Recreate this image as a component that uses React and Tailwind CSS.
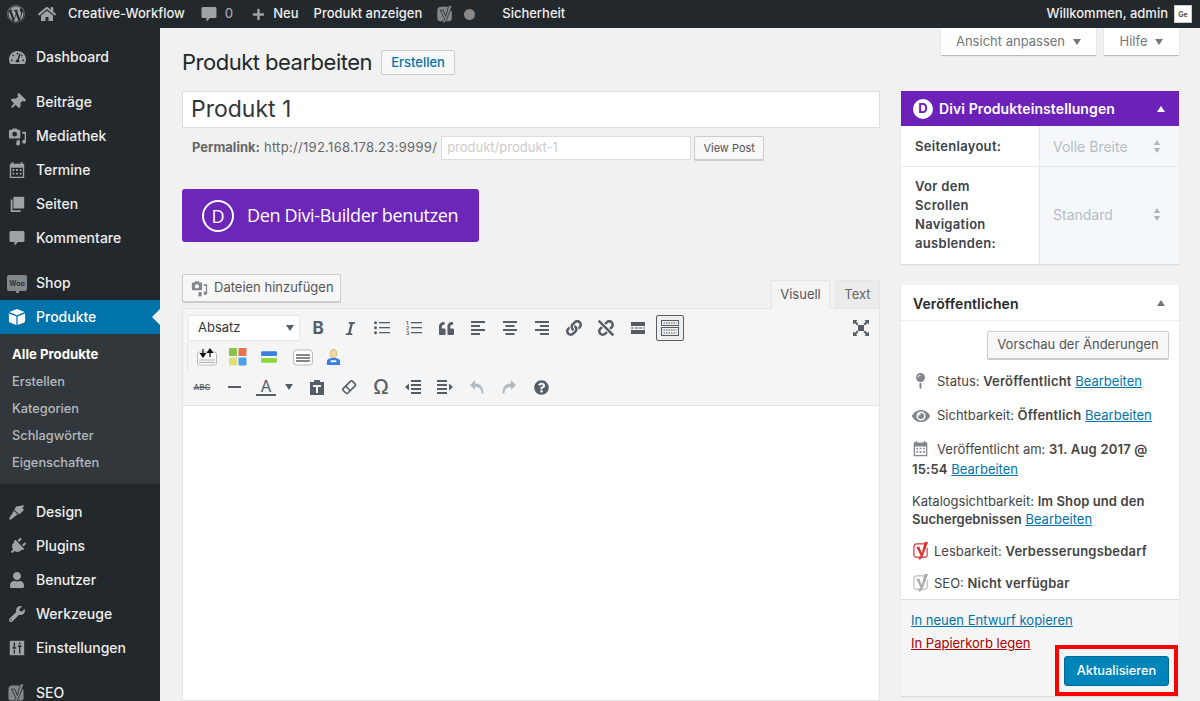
import {
  FaWordpress, FaHome, FaPlus, FaThumbtack, FaPlug, FaUser, FaWrench,
  FaTachometerAlt, FaEye, FaMapPin, FaItalic, FaQuoteLeft, FaLink, FaUnlink, FaQuestionCircle,
} from 'react-icons/fa';

const font = 'font-["Inter","Liberation_Sans",sans-serif]';

const YoastIcon = ({ className, stroke = 'currentColor', y = 'currentColor', filled }) => (
  <svg viewBox="0 0 20 20" className={className} fill="none">
    <path
      d="M13 3H5a3 3 0 0 0-3 3v9a2 2 0 0 0 2 2h10a2 2 0 0 0 2-2V7"
      stroke={stroke}
      strokeWidth="1.200"
      fill={filled ? stroke : 'none'}
    />
    <path
      d="M4.500 6h3.200l2.600 6.500L13.300 1h3.700L10.800 17c-.7 1.600-1.800 2.400-3.800 2.400v-2.200c1 0 1.500-.4 1.800-1.200L9 15.200z"
      fill={y}
      stroke={filled ? '#23282d' : 'none'}
      strokeWidth="0.800"
    />
  </svg>
);

const MediaIcon = ({ className }) => (
  <svg viewBox="0 0 20 20" className={className} fill="currentColor">
    <path d="M2 3h2l1-1.500h4l1 1.500h2a1 1 0 0 1 1 1v7a1 1 0 0 1-1 1H2a1 1 0 0 1-1-1V4a1 1 0 0 1 1-1zm5 2a2.500 2.500 0 1 0 0 5 2.500 2.500 0 0 0 0-5z" />
    <path d="M15 5h4v10.500a2 2 0 1 1-1.500-1.900V7H15zM9 14h3.500v3.500a2 2 0 1 1-1.500-1.900V15.500H9z" />
  </svg>
);

const CalendarIcon = ({ className }) => (
  <svg viewBox="0 0 20 20" className={className} fill="currentColor">
    <path d="M2 3h2V1.500h2V3h8V1.500h2V3h2v16H2zm1.500 4.500V17.500h13V7.500zM5 9h2v2H5zm4 0h2v2H9zm4 0h2v2h-2zm-8 4h2v2H5zm4 0h2v2H9zm4 0h2v2h-2z" />
  </svg>
);

const PagesIcon = ({ className }) => (
  <svg viewBox="0 0 20 20" className={className} fill="currentColor">
    <path d="M6 2h12v13H6z" /><path d="M3 5h2v12h9v2H3z" />
  </svg>
);

const BubbleIcon = ({ className }) => (
  <svg viewBox="0 0 16 16" className={className} fill="currentColor">
    <path d="M2 1h12a1.500 1.500 0 0 1 1.500 1.500v8A1.500 1.500 0 0 1 14 12H9l-3.500 3.500V12H2a1.500 1.500 0 0 1-1.500-1.500v-8A1.500 1.500 0 0 1 2 1z" />
  </svg>
);

const BrushIcon = ({ className }) => (
  <svg viewBox="0 0 20 20" className={className} fill="currentColor">
    <path d="M9 4l9-1.500-2 4 2 1-1.500 1.500-3 3-1 .5L7 7.500z" />
    <path d="M6.500 8.500l4.500 4-2 1.500-6 4.500a1.200 1.200 0 0 1-1.500-1.700L5 11z" />
  </svg>
);

const WooIcon = () => (
  <div className="relative w-[20px] h-[16px] rounded-[2px] bg-[#82878c] flex items-center justify-center text-[7px] leading-none font-semibold text-[#23282d]">
    Woo
    <span className="absolute -bottom-[2px] left-[9px] w-[3px] h-[3px] bg-[#82878c]" />
  </div>
);

const BoxIcon = ({ className }) => (
  <svg viewBox="0 0 20 20" className={className} fill="currentColor">
    <path d="M10 1l8.500 3.500L10 8 1.500 4.500z" /><path d="M1 6l8.300 3.400V19L2 16a1.500 1.500 0 0 1-1-1.400z" /><path d="M19 6l-8.300 3.400V19l7.300-3a1.500 1.500 0 0 0 1-1.400z" />
  </svg>
);

const SlidersIcon = ({ className }) => (
  <svg viewBox="0 0 20 20" className={className}>
    <rect x="2" y="2" width="16" height="16" fill="currentColor" />
    <path d="M7 4v6M5 10h4M7 12v4M13 4v2M11 8h4M13 8v8" stroke="#23282d" strokeWidth="1.500" fill="none" />
  </svg>
);

// small filled triangle used on selects and box toggles
const Caret = ({ up, small, className = '' }) => (
  <svg
    viewBox="0 0 10 7"
    preserveAspectRatio="none"
    className={`${small ? 'w-[6px] h-[5px]' : 'w-[8px] h-[6px]'} ${className}`}
    fill="currentColor"
  >
    <path d={up ? 'M5 0l5 7H0z' : 'M0 0h10L5 7z'} />
  </svg>
);

// alignment and indent glyphs, all built from bars
const Bars = ({ rows, arrow }) => (
  <svg viewBox="0 0 16 14" className="w-[16px] h-[14px]" fill="currentColor">
    {rows.map(([x, w], i) => <rect key={i} x={x} y={i * (12 / (rows.length - 1))} width={w} height="2" />)}
    {arrow === 'left' && <path d="M0 7l4-3.500v7z" />}
    {arrow === 'right' && <path d="M16 7l-4-3.500v7z" />}
  </svg>
);

const ListIcon = ({ numbered }) => (
  <svg viewBox="0 0 16 14" className="w-[16px] h-[14px]" fill="currentColor">
    {[1, 6, 11].map((y, i) => (
      <g key={y}>
        {numbered
          ? <text x="0" y={y + 3} fontSize="5" fontWeight="700">{i + 1}</text>
          : <circle cx="1.500" cy={y + 0.800} r="1.500" />}
        <rect x="5" y={y} width="11" height="1.300" />
      </g>
    ))}
  </svg>
);

const menuTop = [
  { label: 'Dashboard', icon: <FaTachometerAlt className="w-[17px] h-[17px]" /> },
];
const menuContent = [
  { label: 'Beiträge', icon: <FaThumbtack className="w-[16px] h-[16px] rotate-45" /> },
  { label: 'Mediathek', icon: <MediaIcon className="w-[19px] h-[19px]" /> },
  { label: 'Termine', icon: <CalendarIcon className="w-[18px] h-[18px]" /> },
  { label: 'Seiten', icon: <PagesIcon className="w-[18px] h-[18px]" /> },
  { label: 'Kommentare', icon: <BubbleIcon className="w-[16px] h-[16px]" /> },
];
const subItems = ['Erstellen', 'Kategorien', 'Schlagwörter', 'Eigenschaften'];
const menuBottom = [
  { label: 'Design', icon: <BrushIcon className="w-[18px] h-[18px]" /> },
  { label: 'Plugins', icon: <FaPlug className="w-[17px] h-[17px] rotate-45" /> },
  { label: 'Benutzer', icon: <FaUser className="w-[16px] h-[16px]" /> },
  { label: 'Werkzeuge', icon: <FaWrench className="w-[16px] h-[16px]" /> },
  { label: 'Einstellungen', icon: <SlidersIcon className="w-[18px] h-[18px]" /> },
];

const MenuItem = ({ label, icon }) => (
  <div className="h-[34px] flex items-center text-[14px] font-medium text-[#eee]">
    <span className="w-[36px] flex justify-center pl-[1px] pr-[3px] text-[#9ea3a8]">{icon}</span>
    <span className="pb-[2px]">{label}</span>
  </div>
);

const Sidebar = () => (
  <aside className="w-[160px] shrink-0 bg-[#23282d] pt-[12px]">
    {menuTop.map((m) => <MenuItem key={m.label} {...m} />)}
    <div className="h-[11px]" />
    {menuContent.map((m) => <MenuItem key={m.label} {...m} />)}
    <div className="h-[11px]" />
    <MenuItem label="Shop" icon={<WooIcon />} />
    <div className="relative h-[34px] flex items-center bg-[#0073aa] text-[14px] font-medium text-white">
      <span className="w-[36px] flex justify-center pr-[2px]"><BoxIcon className="w-[18px] h-[18px]" /></span>
      <span className="pb-[2px]">Produkte</span>
      <span className="absolute right-0 top-[9px] border-y-[8px] border-r-[8px] border-y-transparent border-r-[#f1f1f1]" />
    </div>
    <div className="bg-[#32373c] h-[150px] pt-[7px] pl-[12px] text-[12.800px]">
      <div className="h-[27px] flex items-center text-[13.200px] font-bold text-white">Alle Produkte</div>
      {subItems.map((s) => (
        <div key={s} className="h-[27px] flex items-center font-medium text-[#b4b9be]">{s}</div>
      ))}
    </div>
    <div className="h-[11px]" />
    {menuBottom.map((m) => <MenuItem key={m.label} {...m} />)}
    <div className="h-[11px]" />
    <MenuItem label="SEO" icon={<YoastIcon className="w-[20px] h-[20px]" stroke="#82878c" y="#82878c" filled />} />
  </aside>
);

const AdminBar = () => (
  <header className="h-[28px] shrink-0 bg-[#23282d] flex items-center justify-between text-[13px] font-medium text-[#eee]">
    <div className="flex items-center">
      <FaWordpress className="ml-[7px] w-[18px] h-[18px] text-[#9ea3a8]" />
      <FaHome className="ml-[13px] w-[18px] h-[18px] text-[#9ea3a8]" />
      <span className="ml-[12px]">Creative-Workflow</span>
      <BubbleIcon className="ml-[16px] w-[16px] h-[16px] text-[#9ea3a8]" />
      <span className="ml-[8px] text-[#9ea3a8]">0</span>
      <FaPlus className="ml-[19px] w-[13px] h-[13px] text-[#9ea3a8]" />
      <span className="ml-[8px]">Neu</span>
      <span className="ml-[15px]">Produkt anzeigen</span>
      <YoastIcon className="ml-[14px] w-[19px] h-[20px]" stroke="#82878c" y="#82878c" filled />
      <span className="ml-[9px] w-[11px] h-[11px] rounded-full bg-[#888]" />
      <span className="ml-[27px]">Sicherheit</span>
    </div>
    <div className="flex items-center pr-[8px]">
      <span>Willkommen, admin</span>
      <span className="ml-[6px] w-[18px] h-[18px] bg-white border border-[#ccc] flex items-center justify-center text-[7px] font-bold leading-none text-[#555]">Ge</span>
    </div>
  </header>
);

const ToolButton = ({ children, active }) => (
  <span className={`w-[28px] h-[26px] mr-[4px] shrink-0 flex items-center justify-center text-[#555d66] ${active ? 'bg-[#eee] border border-[#555d66] rounded-[2px]' : ''}`}>
    {children}
  </span>
);

const Editor = () => (
  <div className="mt-[-1px] flex-1 bg-white border border-[#e5e5e5]">
    <div className="h-[97px] bg-[#f5f5f5] border-b border-[#e5e5e5] px-[5px] pt-[6px]">
      <div className="flex items-center h-[26px]">
        <div className="w-[112px] h-[26px] mr-[4px] bg-white border border-[#e5e5e5] flex items-center justify-between pl-[9px] pr-[5px] text-[13px] text-[#32373c]">
          Absatz
          <Caret className="text-[#555d66]" />
        </div>
        <ToolButton><span className="text-[17px] font-bold leading-none">B</span></ToolButton>
        <ToolButton><FaItalic className="w-[15px] h-[15px]" /></ToolButton>
        <ToolButton><ListIcon /></ToolButton>
        <ToolButton><ListIcon numbered /></ToolButton>
        <ToolButton><FaQuoteLeft className="w-[15px] h-[15px]" /></ToolButton>
        <ToolButton><Bars rows={[[1, 14], [1, 9], [1, 14], [1, 9]]} /></ToolButton>
        <ToolButton><Bars rows={[[1, 14], [3.500, 9], [1, 14], [3.500, 9]]} /></ToolButton>
        <ToolButton><Bars rows={[[1, 14], [6, 9], [1, 14], [6, 9]]} /></ToolButton>
        <ToolButton><FaLink className="w-[16px] h-[16px]" /></ToolButton>
        <ToolButton><FaUnlink className="w-[16px] h-[16px]" /></ToolButton>
        <ToolButton>
          <svg viewBox="0 0 14 12" className="w-[14px] h-[12px]" fill="currentColor"><path d="M0 0h14v4H0zM0 8h14v4H0zM0 5.500h3v1H0zM4 5.500h3v1H4zM8 5.500h3v1H8zM12 5.500h2v1h-2z" /></svg>
        </ToolButton>
        <ToolButton active>
          <svg viewBox="0 0 20 18" className="w-[20px] h-[18px]" fill="none" stroke="currentColor"><rect x="1.500" y="1.500" width="17" height="5" /><rect x="1.500" y="8.500" width="17" height="8" /><path d="M3.500 4h13M3.500 11h13M3.500 14h13" strokeDasharray="1.500 1" /></svg>
        </ToolButton>
        <span className="ml-auto mr-[-1px] w-[28px] h-[26px] flex items-center justify-center text-[#555d66]">
          <svg viewBox="0 0 16 16" className="w-[16px] h-[16px]" fill="currentColor"><path d="M5 5h6v6H5zM0 0h4.500L3 1.500l2.500 2.500-1.500 1.500L1.500 3 0 4.500zM16 0v4.500L14.500 3 12 5.500 10.500 4 13 1.500 11.500 0zM0 16v-4.500L1.500 13 4 10.500 5.500 12 3 14.500 4.500 16zM16 16h-4.500l1.500-1.500-2.500-2.500 1.500-1.500 2.500 2.500 1.500-1.500z" /></svg>
        </span>
      </div>
      <div className="flex items-center h-[30px] mt-[1px] ml-[-1px] border-l border-[#e5e5e5] pl-[9px]">
        <svg viewBox="0 0 20 18" className="w-[20px] h-[18px]"><rect x="0.500" y="4" width="19" height="13" rx="2" fill="#fff" stroke="#bbb" /><path d="M2 12h16M2 14.500h16" stroke="#aaa" /><path d="M6 1v7M3.500 5.500L6 9l2.500-3.500zM13 9V2M10.500 4.500L13 1l2.500 3.500z" stroke="#111" fill="#111" strokeWidth="1.200" /></svg>
        <svg viewBox="0 0 18 18" className="w-[18px] h-[18px] ml-[12px]"><rect width="8" height="8" rx="1" fill="#8bc34a" /><rect x="9.500" width="8" height="8" rx="1" fill="#e8734a" /><rect y="9.500" width="8" height="8" rx="1" fill="#e2dc7a" /><rect x="9.500" y="9.500" width="8" height="8" rx="1" fill="#4a9fe8" /></svg>
        <svg viewBox="0 0 17 14" className="w-[16px] h-[14px] ml-[14px]"><rect y="1" width="17" height="5" rx="1.500" fill="#3b7fe0" /><rect y="8" width="17" height="5" rx="1.500" fill="#8fd63f" /></svg>
        <svg viewBox="0 0 20 18" className="w-[20px] h-[18px] ml-[16px]"><rect x="0.500" y="2" width="19" height="15" rx="3" fill="#fff" stroke="#bbb" /><path d="M3 7h14M3 10h14M3 13h14" stroke="#111" /></svg>
        <svg viewBox="0 0 16 18" className="w-[15px] h-[17px] ml-[13px]"><ellipse cx="8" cy="5" rx="3.500" ry="4.500" fill="#f0d9a0" stroke="#b79a55" strokeWidth="0.600" /><path d="M1 17v-4c0-2 2-3.500 7-3.500s7 1.500 7 3.500v4z" fill="#3b7fe0" /><rect x="5" y="12" width="6" height="2" fill="#fff" /></svg>
      </div>
      <div className="flex items-center h-[26px] mt-[2px]">
        <ToolButton><span className="text-[8px] font-medium line-through">ABC</span></ToolButton>
        <ToolButton><span className="w-[13px] h-[2px] bg-[#555d66]" /></ToolButton>
        <span className="w-[28px] h-[26px] flex flex-col items-center justify-center text-[#555d66] text-[16px] leading-[16px]">
          A<span className="w-[20px] h-[2px] bg-[#555d66]" />
        </span>
        <span className="w-[18px] flex justify-center text-[#555d66]"><Caret /></span>
        <span className="w-[5px]" />
        <ToolButton>
          <svg viewBox="0 0 16 16" className="w-[16px] h-[16px]" fill="currentColor"><path d="M1 3h4V1h6v2h4v13H1zM4 6v2h3v6h2V8h3V6z" fillRule="evenodd" /></svg>
        </ToolButton>
        <ToolButton>
          <svg viewBox="0 0 16 16" className="w-[16px] h-[16px]" fill="none" stroke="currentColor" strokeWidth="1.600"><rect x="1.500" y="5" width="13" height="6.500" rx="1.500" transform="rotate(-45 8 8)" /><path d="M4.500 7l4.500 4.500" /></svg>
        </ToolButton>
        <ToolButton><span className="text-[20px] leading-none font-medium">Ω</span></ToolButton>
        <ToolButton><Bars rows={[[6, 10], [6, 10], [6, 10], [6, 10]]} arrow="left" /></ToolButton>
        <ToolButton><Bars rows={[[0, 10], [0, 10], [0, 10], [0, 10]]} arrow="right" /></ToolButton>
        <ToolButton>
          <svg viewBox="0 0 16 16" className="w-[16px] h-[16px] text-[#b4b9be]" fill="currentColor"><path d="M1 6l5-5v3.500c5 0 8.500 3 8.500 10h-2c0-4.500-2-6.500-6.500-6.500V11z" /></svg>
        </ToolButton>
        <ToolButton>
          <svg viewBox="0 0 16 16" className="w-[16px] h-[16px] text-[#b4b9be]" fill="currentColor"><path d="M15 6l-5-5v3.500c-5 0-8.500 3-8.500 10h2c0-4.500 2-6.500 6.500-6.500V11z" /></svg>
        </ToolButton>
        <ToolButton><FaQuestionCircle className="w-[15px] h-[15px]" /></ToolButton>
      </div>
    </div>
  </div>
);

const LeftColumn = () => (
  <div className="w-[698px] shrink-0 flex flex-col">
    <div className="h-[63px] flex items-center pt-[5px]">
      <h1 className="text-[22px] leading-none text-[#23282d] tracking-[-0.5px] pb-[1px]">Produkt bearbeiten</h1>
      <span className="ml-[9px] mt-[1px] h-[25px] w-[74px] flex items-center justify-center bg-[#f7f7f7] border border-[#ccc] rounded-[2px] text-[13px] font-medium text-[#0073aa]">Erstellen</span>
    </div>
    <div className="h-[37px] bg-white border border-[#ddd] flex items-center pl-[8px] text-[23px] font-normal text-[#32373c]">Produkt 1</div>
    <div className="mt-[8px] h-[24px] flex items-center pl-[10px] text-[13px] text-[#666]">
      <span className="font-bold">Permalink:</span>
      <span className="ml-[4px] tracking-[0.3px]">http://192.168.178.23:9999/</span>
      <span className="ml-[4px] w-[250px] h-[24px] bg-white border border-[#ddd] flex items-center pl-[5px] text-[#ccc]">produkt/produkt-1</span>
      <span className="ml-[3px] w-[70px] h-[24px] flex items-center justify-center bg-[#f7f7f7] border border-[#ccc] rounded-[2px] shadow-[0_1px_0_#ccc] text-[11px] text-[#555]">View Post</span>
    </div>
    <div className="mt-[29px] w-[297px] h-[53px] bg-[#6c26b8] rounded-[3px] flex items-center pl-[20px] text-white font-['Open_Sans',sans-serif]">
      <span className="w-[32px] h-[32px] rounded-full border-2 border-white flex items-center justify-center text-[18px] leading-none">D</span>
      <span className="ml-[13px] text-[18px] tracking-[-0.35px]">Den Divi-Builder benutzen</span>
    </div>
    <div className="mt-[32px] h-[35px] flex items-start justify-between">
      <span className="w-[159px] h-[28px] flex items-center bg-[#f7f7f7] border border-[#ccc] rounded-[2px] shadow-[0_1px_0_#ccc] pl-[8px] text-[13px] text-[#555]">
        <MediaIcon className="w-[17px] h-[17px] text-[#82878c] mr-[6px]" />
        Dateien hinzufügen
      </span>
      <div className="flex items-end h-[35px] gap-[5px] self-start">
        <span className="relative z-10 w-[59px] h-[29px] flex items-center justify-center bg-[#f5f5f5] border border-[#e5e5e5] border-b-[#f5f5f5] text-[13px] text-[#555]">Visuell</span>
        <span className="w-[45px] h-[29px] flex items-center justify-center bg-[#ebebeb] border border-[#e5e5e5] text-[13px] text-[#666]">Text</span>
      </div>
    </div>
    <Editor />
  </div>
);

const StatusLine = ({ icon, children, className = '' }) => (
  <div className={`flex text-[13px] leading-[20px] text-[#444] ${className}`}>
    {icon}
    <div>{children}</div>
  </div>
);

const Strong = ({ children }) => <b className="font-semibold tracking-[0.2px]">{children}</b>;

const Edit = () => <span className="text-[#0073aa] underline">Bearbeiten</span>;

const Stepper = () => (
  <span className="flex flex-col items-center gap-[3px] text-[#a9b4bf]">
    <Caret up small />
    <Caret small />
  </span>
);

const RightColumn = () => (
  <div className="w-[278px] ml-[21px] shrink-0">
    <div className="flex justify-end gap-[8px] h-[27px]">
      <span className="w-[155px] bg-white shadow-[0_1px_1px_#bbb] flex items-center justify-center text-[13px] text-[#72777c]">Ansicht anpassen <Caret className="ml-[8px]" /></span>
      <span className="w-[75px] bg-white shadow-[0_1px_1px_#bbb] flex items-center justify-center text-[13px] text-[#72777c]">Hilfe <Caret className="ml-[8px]" /></span>
    </div>
    {/* Divi box */}
    <div className="mt-[36px] bg-white shadow-[0_1px_1px_#ddd]">
      <div className="h-[35px] bg-[#6c22b8] flex items-center pl-[12px] pr-[14px] text-white">
        <span className="w-[20px] h-[20px] rounded-full bg-white flex items-center justify-center text-[13px] font-bold text-[#6c22b8]">D</span>
        <span className="ml-[6px] text-[14px] font-semibold tracking-[0.1px]">Divi Produkteinstellungen</span>
        <Caret up className="ml-auto" />
      </div>
      <div className="flex h-[41px] border-b border-[#e5e9ee] text-[13px]">
        <div className="w-[139px] pl-[14px] pt-[2px] flex items-center font-semibold tracking-[0.3px] text-[#3c434a] border-r border-[#e5e9ee]">Seitenlayout:</div>
        <div className="flex-1 bg-[#f5f8fa] flex items-center justify-between pl-[13px] pr-[19px] text-[14px] text-[#b4bcc6]">Volle Breite <Stepper /></div>
      </div>
      <div className="flex h-[97px] text-[13px]">
        <div className="w-[139px] pl-[14px] pr-[30px] pb-[2px] flex items-center font-semibold tracking-[0.3px] leading-[19px] text-[#3c434a] border-r border-[#e5e9ee]">Vor dem Scrollen Navigation ausblenden:</div>
        <div className="flex-1 bg-[#f5f8fa] flex items-center justify-between pl-[13px] pr-[19px] pb-[2px] text-[14px] text-[#b4bcc6]">Standard <Stepper /></div>
      </div>
    </div>
    {/* Publish box */}
    <div className="mt-[21px] bg-white shadow-[0_1px_1px_#ddd]">
      <div className="h-[36px] border-b border-[#eee] flex items-center pl-[12px] pr-[14px] text-[14px] font-semibold tracking-[0.1px] text-[#23282d]">
        <span className="pt-[2px]">Veröffentlichen</span>
        <Caret up className="ml-auto text-[#72777c]" />
      </div>
      <div className="h-[278px] px-[11px] pt-[10px]">
        <div className="flex justify-end">
          <span className="w-[182px] h-[28px] -mr-[1px] flex items-center justify-center bg-[#f7f7f7] border border-[#ccc] rounded-[2px] shadow-[0_1px_0_#ccc] text-[13px] text-[#555]">Vorschau der Änderungen</span>
        </div>
        <StatusLine className="mt-[12px]" icon={<FaMapPin className="w-[15px] h-[16px] mt-[2px] mr-[9px] ml-[1px] text-[#82878c]" />}>
          Status: <Strong>Veröffentlicht</Strong> <Edit />
        </StatusLine>
        <StatusLine className="mt-[14px]" icon={<FaEye className="w-[18px] h-[16px] mt-[3px] mr-[7px] text-[#82878c]" />}>
          Sichtbarkeit: <Strong>Öffentlich</Strong> <Edit />
        </StatusLine>
        <div className="mt-[14px] text-[13px] leading-[20px] text-[#444]">
          <div>
            <CalendarIcon className="inline w-[17px] h-[17px] mr-[8px] text-[#82878c] align-[-3px]" />
            Veröffentlicht am: <Strong>31. Aug 2017 @</Strong>
          </div>
          <div><Strong>15:54</Strong> <Edit /></div>
        </div>
        <div className="mt-[13px] text-[13px] leading-[18px] text-[#444]">
          <div>Katalogsichtbarkeit: <b className="font-semibold tracking-[0.1px]">Im Shop und den</b></div>
          <div><b className="font-semibold">Suchergebnissen</b> <Edit /></div>
        </div>
        <StatusLine className="mt-[13px]" icon={<YoastIcon className="w-[19px] h-[19px] mr-[3px]" stroke="#dc3232" y="#dc3232" />}>
          Lesbarkeit: <Strong>Verbesserungsbedarf</Strong>
        </StatusLine>
        <StatusLine className="mt-[12px]" icon={<YoastIcon className="w-[19px] h-[19px] mr-[3px]" stroke="#bbb" y="#aaa" />}>
          SEO: <Strong>Nicht verfügbar</Strong>
        </StatusLine>
      </div>
      <div className="relative h-[97px] bg-[#f5f5f5] border-t border-[#ddd] px-[10px] pt-[10px] text-[13px]">
        <div className="text-[#0073aa] underline leading-[20px]">In neuen Entwurf kopieren</div>
        <div className="mt-[3px] text-[#a00] underline leading-[20px]">In Papierkorb legen</div>
        <div className="flex justify-end mt-[3px]">
          <span className="w-[105px] h-[30px] flex items-center justify-center bg-[#0085ba] border border-[#006799] rounded-[3px] text-[12.800px] font-medium text-white">Aktualisieren</span>
        </div>
        {/* red highlight drawn over the screenshot */}
        <span className="absolute left-[154px] top-[45px] w-[123px] h-[51px] border-[4px] border-[#f00]" />
      </div>
    </div>
  </div>
);

export default function App() {
  return (
    <div className={`h-[701px] w-[1200px] overflow-hidden flex flex-col bg-[#f1f1f1] ${font}`}>
      <AdminBar />
      <div className="flex flex-1 min-h-0">
        <Sidebar />
        <main className="flex-1 flex pl-[22px] min-w-0 min-h-0">
          <LeftColumn />
          <RightColumn />
        </main>
      </div>
    </div>
  );
}
